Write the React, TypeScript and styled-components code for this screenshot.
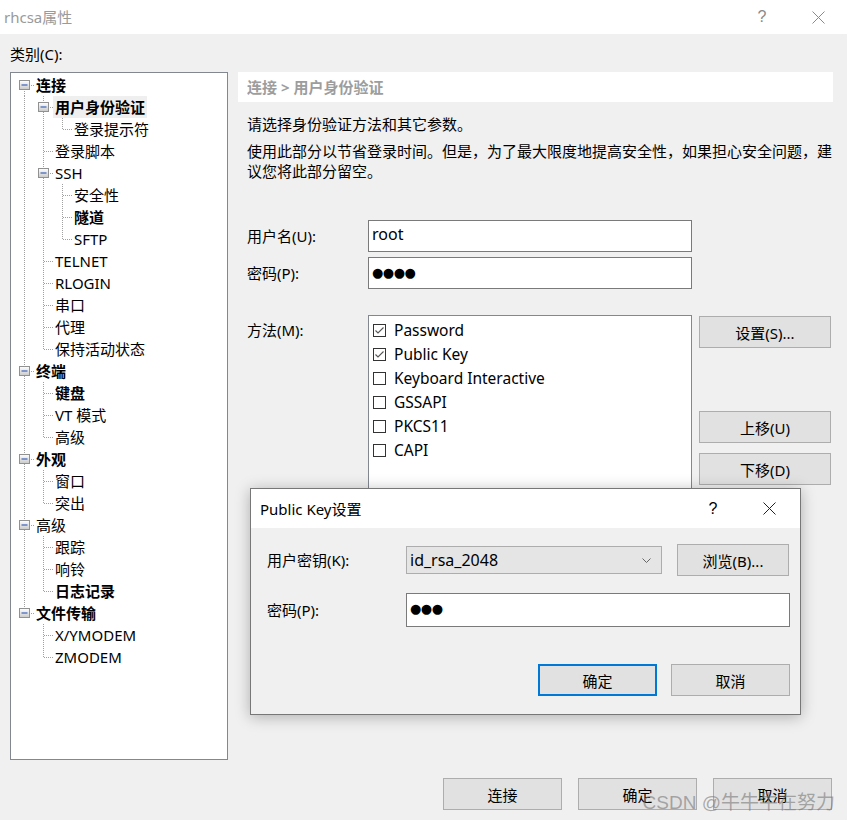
import React from "react";
import styled, { createGlobalStyle } from "styled-components";

const GlobalStyle = createGlobalStyle`
  html, body {
    margin: 0;
    padding: 0;
    background: #f0f0f0;
  }
  body {
    font-family: "Noto Sans", "Noto Sans CJK SC", sans-serif;
    font-size: 15px;
    color: #000;
  }
  * {
    box-sizing: border-box;
  }
`;

const Window = styled.div`
  position: relative;
  width: 847px;
  height: 820px;
  overflow: hidden;
  background: #f0f0f0;
`;

const TitleBar = styled.div<{ $height: number }>`
  display: flex;
  align-items: center;
  height: ${(p) => p.$height}px;
  background: #fff;
`;

const TitleText = styled.div<{ $muted?: boolean; $pad: number }>`
  flex: 1;
  padding-left: ${(p) => p.$pad}px;
  color: ${(p) => (p.$muted ? "#9a9a9a" : "#000")};
  font-size: 15px;
  line-height: 20px;
`;

const Caption = styled.div<{ $gap: number; $right: number }>`
  display: flex;
  gap: ${(p) => p.$gap}px;
  padding-right: ${(p) => p.$right}px;
  height: 100%;
`;

const CaptionButton = styled.div<{ $muted?: boolean; $width: number }>`
  display: flex;
  align-items: center;
  justify-content: center;
  width: ${(p) => p.$width}px;
  height: 100%;
  color: ${(p) => (p.$muted ? "#8a8a8a" : "#000")};
  font-family: "Liberation Sans", sans-serif;
  font-size: 16px;
  font-weight: 300;
`;

const Content = styled.div`
  padding: 10px 14px 0 10px;
`;

const CategoryLabel = styled.div`
  height: 20px;
  line-height: 20px;
  margin-bottom: 8px;
`;

const Main = styled.div`
  display: grid;
  grid-template-columns: 218px 595px;
  gap: 10px;
  height: 688px;
`;

/* ---------- tree ---------- */

const TreeBox = styled.div`
  background: #fff;
  border: 1px solid #828790;
  padding: 1px 0 0 4px;
`;

const TreeRow = styled.div`
  display: flex;
  align-items: center;
  height: 22px;
`;

const TreeLabel = styled.span<{ $bold?: boolean; $selected?: boolean }>`
  padding: 0 2px;
  line-height: 22px;
  font-size: 15px;
  font-weight: ${(p) => (p.$bold ? 700 : 400)};
  background: ${(p) => (p.$selected ? "#efefef" : "transparent")};
  white-space: nowrap;
`;

type Node = {
  label: string;
  bold?: boolean;
  selected?: boolean;
  children?: Node[];
};

const tree: Node[] = [
  {
    label: "连接",
    bold: true,
    children: [
      {
        label: "用户身份验证",
        bold: true,
        selected: true,
        children: [{ label: "登录提示符" }],
      },
      { label: "登录脚本" },
      {
        label: "SSH",
        children: [
          { label: "安全性" },
          { label: "隧道", bold: true },
          { label: "SFTP" },
        ],
      },
      { label: "TELNET" },
      { label: "RLOGIN" },
      { label: "串口" },
      { label: "代理" },
      { label: "保持活动状态" },
    ],
  },
  {
    label: "终端",
    bold: true,
    children: [
      { label: "键盘", bold: true },
      { label: "VT 模式" },
      { label: "高级" },
    ],
  },
  {
    label: "外观",
    bold: true,
    children: [{ label: "窗口" }, { label: "突出" }],
  },
  {
    label: "高级",
    children: [{ label: "跟踪" }, { label: "响铃" }, { label: "日志记录", bold: true }],
  },
  {
    label: "文件传输",
    bold: true,
    children: [{ label: "X/YMODEM" }, { label: "ZMODEM" }],
  },
];

type FlatRow = {
  node: Node;
  guides: boolean[];
  hasNext: boolean;
  first: boolean;
};

function flatten(nodes: Node[], guides: boolean[] = [], out: FlatRow[] = []) {
  nodes.forEach((node, i) => {
    const hasNext = i < nodes.length - 1;
    out.push({ node, guides, hasNext, first: out.length === 0 });
    if (node.children) flatten(node.children, [...guides, hasNext], out);
  });
  return out;
}

const DOT = "#a0a0a0";

function GuideCell({
  kind,
  hasNext,
  first,
  expander,
}: {
  kind: "pipe" | "blank" | "node";
  hasNext?: boolean;
  first?: boolean;
  expander?: boolean;
}) {
  return (
    <svg width="19" height="22" viewBox="0 0 19 22" style={{ flex: "none" }}>
      {kind === "pipe" && (
        <line x1="9.5" y1="0" x2="9.5" y2="22" stroke={DOT} strokeDasharray="1 1" />
      )}
      {kind === "node" && (
        <>
          <line
            x1="9.5"
            y1={first ? 11 : 0}
            x2="9.5"
            y2={hasNext ? 22 : 11}
            stroke={DOT}
            strokeDasharray="1 1"
          />
          <line x1="10" y1="11.5" x2="19" y2="11.5" stroke={DOT} strokeDasharray="1 1" />
          {expander && (
            <>
              <defs>
                <linearGradient id="exp" x1="0" y1="0" x2="0" y2="1">
                  <stop offset="0" stopColor="#ffffff" />
                  <stop offset="1" stopColor="#c9c9c9" />
                </linearGradient>
              </defs>
              <rect x="4.5" y="6.5" width="10" height="9" fill="url(#exp)" stroke="#919191" />
              <line x1="6.5" y1="11" x2="12.5" y2="11" stroke="#3a62b8" strokeWidth="1.2" />
            </>
          )}
        </>
      )}
    </svg>
  );
}

function Tree() {
  const rows = flatten(tree);
  return (
    <TreeBox>
      {rows.map((r, i) => (
        <TreeRow key={i}>
          {r.guides.map((g, k) => (
            <GuideCell key={k} kind={g ? "pipe" : "blank"} />
          ))}
          <GuideCell
            kind="node"
            hasNext={r.hasNext}
            first={r.first}
            expander={!!r.node.children}
          />
          <TreeLabel $bold={r.node.bold} $selected={r.node.selected}>
            {r.node.label}
          </TreeLabel>
        </TreeRow>
      ))}
    </TreeBox>
  );
}

/* ---------- right panel ---------- */

const Panel = styled.div`
  display: flex;
  flex-direction: column;
`;

const Breadcrumb = styled.div`
  height: 30px;
  line-height: 30px;
  padding-left: 9px;
  background: #fff;
  color: #9d9d9d;
  font-weight: 700;
  font-size: 15px;
`;

const Text = styled.p<{ $top: number }>`
  margin: ${(p) => p.$top}px -2px 0 0;
  padding: 0 0 0 9px;
  line-height: 20px;
  font-size: 15px;
`;

const FormRow = styled.div<{ $top: number; $align?: string }>`
  display: flex;
  align-items: ${(p) => p.$align || "center"};
  margin-top: ${(p) => p.$top}px;
`;

const FieldLabel = styled.div<{ $width: number; $pad: number; $top?: number }>`
  width: ${(p) => p.$width}px;
  padding-left: ${(p) => p.$pad}px;
  margin-top: ${(p) => p.$top || 0}px;
  line-height: 20px;
  flex: none;
`;

const Input = styled.div<{ $width: number; $height: number }>`
  width: ${(p) => p.$width}px;
  height: ${(p) => p.$height}px;
  background: #fff;
  border: 1px solid #7a7a7a;
  padding: 2px 0 0 3px;
  font-size: 16px;
  line-height: 22px;
`;

const Dots = styled.span`
  font-family: "DejaVu Sans", sans-serif;
  font-size: 13px;
  letter-spacing: -0.5px;
  line-height: 22px;
`;

const MethodList = styled.div`
  width: 324px;
  height: 200px;
  background: #fff;
  border: 1px solid #828790;
  padding: 2px 0 0 4px;
`;

const MethodItem = styled.label`
  display: flex;
  align-items: center;
  gap: 8px;
  height: 24px;
  font-size: 15.5px;
`;

const Box = styled.span`
  display: flex;
  align-items: center;
  justify-content: center;
  width: 13px;
  height: 13px;
  border: 1px solid #333;
  background: #fff;
  flex: none;
`;

const SideButtons = styled.div`
  display: flex;
  flex-direction: column;
  margin-left: 7px;
`;

const Button = styled.div<{ $width: number; $top?: number; $left?: number; $default?: boolean }>`
  display: flex;
  align-items: center;
  justify-content: center;
  width: ${(p) => p.$width}px;
  height: 32px;
  margin-top: ${(p) => p.$top || 0}px;
  margin-left: ${(p) => p.$left || 0}px;
  background: #e1e1e1;
  border: ${(p) => (p.$default ? "2px solid #0078d7" : "1px solid #adadad")};
  font-size: 15px;
  flex: none;
`;

const BottomBar = styled.div`
  display: flex;
  justify-content: flex-end;
  gap: 16px;
  margin-top: 18px;
  padding-right: 1px;
`;

function Check({ checked }: { checked: boolean }) {
  return (
    <Box>
      {checked && (
        <svg width="11" height="11" viewBox="0 0 11 11">
          <polyline points="1.5,5.5 4,8 9.5,2.5" fill="none" stroke="#555" strokeWidth="1.1" />
        </svg>
      )}
    </Box>
  );
}

const methods: [string, boolean][] = [
  ["Password", true],
  ["Public Key", true],
  ["Keyboard Interactive", false],
  ["GSSAPI", false],
  ["PKCS11", false],
  ["CAPI", false],
];

/* ---------- dialog ---------- */

const Dialog = styled.div`
  position: absolute;
  left: 250px;
  top: 488px;
  width: 551px;
  height: 227px;
  background: #f0f0f0;
  border: 1px solid #777;
  box-shadow: 0 2px 14px rgba(0, 0, 0, 0.28);
`;

const DialogBody = styled.div`
  padding: 0 10px 0 16px;
`;

const Combo = styled.div`
  display: flex;
  align-items: center;
  justify-content: space-between;
  width: 256px;
  height: 28px;
  background: #e5e5e5;
  border: 1px solid #adadad;
  padding: 0 10px 0 3px;
  font-size: 16px;
`;

const DialogButtons = styled.div`
  display: flex;
  justify-content: flex-end;
  gap: 14px;
  margin-top: 37px;
`;

const Watermark = styled.div`
  position: absolute;
  right: 12px;
  bottom: 6px;
  font-family: "Liberation Sans", "Noto Sans CJK SC", sans-serif;
  font-size: 19px;
  color: rgba(120, 120, 120, 0.6);
  white-space: nowrap;
  pointer-events: none;
`;

function CloseIcon({ color }: { color: string }) {
  return (
    <svg width="13" height="13" viewBox="0 0 13 13">
      <path d="M0.5 0.5 L12.5 12.5 M12.5 0.5 L0.5 12.5" stroke={color} strokeWidth="1" />
    </svg>
  );
}

export default function App() {
  return (
    <Window>
      <GlobalStyle />
      <TitleBar $height={34}>
        <TitleText $muted $pad={4}>
          rhcsa属性
        </TitleText>
        <Caption $gap={0} $right={1}>
          <CaptionButton $muted $width={56}>?</CaptionButton>
          <CaptionButton $muted $width={56}>
            <CloseIcon color="#8a8a8a" />
          </CaptionButton>
        </Caption>
      </TitleBar>

      <Content>
        <CategoryLabel>类别(C):</CategoryLabel>
        <Main>
          <Tree />
          <Panel>
            <Breadcrumb>连接 &gt; 用户身份验证</Breadcrumb>
            <Text $top={12}>请选择身份验证方法和其它参数。</Text>
            <Text $top={7}>
              使用此部分以节省登录时间。但是，为了最大限度地提高安全性，如果担心安全问题，建议您将此部分留空。
            </Text>

            <FormRow $top={39}>
              <FieldLabel $width={130} $pad={9}>用户名(U):</FieldLabel>
              <Input $width={324} $height={32}>root</Input>
            </FormRow>
            <FormRow $top={5}>
              <FieldLabel $width={130} $pad={9}>密码(P):</FieldLabel>
              <Input $width={324} $height={32}>
                <Dots>●●●●</Dots>
              </Input>
            </FormRow>

            <FormRow $top={26} $align="flex-start">
              <FieldLabel $width={130} $pad={9} $top={5}>方法(M):</FieldLabel>
              <MethodList>
                {methods.map(([name, on]) => (
                  <MethodItem key={name}>
                    <Check checked={on} />
                    {name}
                  </MethodItem>
                ))}
              </MethodList>
              <SideButtons>
                <Button $width={132} $top={1}>设置(S)...</Button>
                <Button $width={132} $top={63}>上移(U)</Button>
                <Button $width={132} $top={10}>下移(D)</Button>
              </SideButtons>
            </FormRow>
          </Panel>
        </Main>

        <BottomBar>
          <Button $width={119}>连接</Button>
          <Button $width={119}>确定</Button>
          <Button $width={119}>取消</Button>
        </BottomBar>
      </Content>

      <Dialog>
        <TitleBar $height={39}>
          <TitleText $pad={9}>Public Key设置</TitleText>
          <Caption $gap={10} $right={8}>
            <CaptionButton $width={46}>?</CaptionButton>
            <CaptionButton $width={46}>
              <CloseIcon color="#222" />
            </CaptionButton>
          </Caption>
        </TitleBar>
        <DialogBody>
          <FormRow $top={16}>
            <FieldLabel $width={139} $pad={0}>用户密钥(K):</FieldLabel>
            <Combo>
              id_rsa_2048
              <svg width="9" height="5" viewBox="0 0 9 5">
                <polyline points="0.5,0.5 4.5,4.5 8.5,0.5" fill="none" stroke="#666" />
              </svg>
            </Combo>
            <Button $width={112} $left={15}>浏览(B)...</Button>
          </FormRow>
          <FormRow $top={17}>
            <FieldLabel $width={139} $pad={0}>密码(P):</FieldLabel>
            <Input $width={384} $height={34}>
              <Dots>●●●</Dots>
            </Input>
          </FormRow>
          <DialogButtons>
            <Button $width={119} $default>确定</Button>
            <Button $width={119}>取消</Button>
          </DialogButtons>
        </DialogBody>
      </Dialog>

      <Watermark>CSDN @牛牛牛在努力</Watermark>
    </Window>
  );
}
